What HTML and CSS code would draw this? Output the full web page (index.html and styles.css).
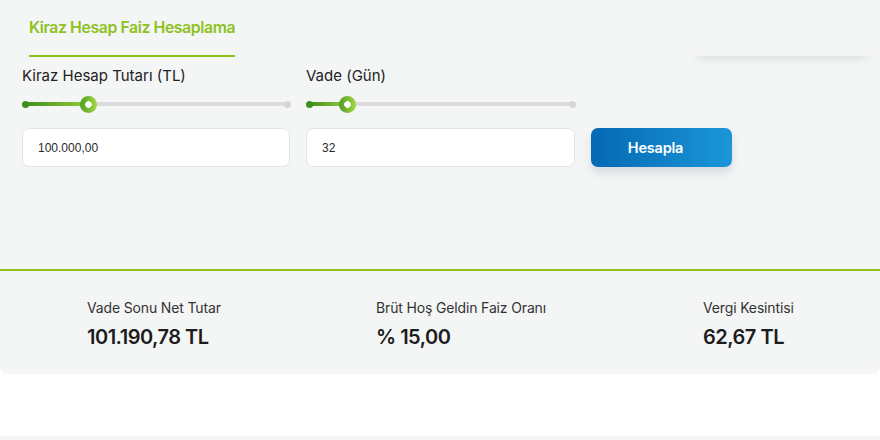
FILE: index.html
```html
<!DOCTYPE html>
<html lang="tr">
<head>
<meta charset="utf-8">
<link rel="stylesheet" href="styles.css">
</head>
<body>
<div class="panel">
  <div class="top">
    <div class="header">
      <div class="tab">Kiraz Hesap Faiz Hesaplama</div>
      <div class="card"></div>
    </div>
    <div class="form">
      <div class="field">
        <div class="label">Kiraz Hesap Tutarı (TL)</div>
        <div class="slider">
          <div class="track"></div>
          <div class="fill" style="width:24.4%"></div>
          <div class="dot start"></div>
          <div class="dot end"></div>
          <div class="thumb" style="left:24.4%"></div>
        </div>
        <div class="input">100.000,00</div>
      </div>
      <div class="field">
        <div class="label">Vade (Gün)</div>
        <div class="slider">
          <div class="track"></div>
          <div class="fill" style="width:14.5%"></div>
          <div class="dot start"></div>
          <div class="dot end"></div>
          <div class="thumb" style="left:14.5%"></div>
        </div>
        <div class="input">32</div>
      </div>
      <div class="action">
        <button class="btn">Hesapla</button>
      </div>
    </div>
  </div>
  <div class="results">
    <div class="result">
      <div class="rlabel">Vade Sonu Net Tutar</div>
      <div class="rvalue">101.190,78 TL</div>
    </div>
    <div class="result">
      <div class="rlabel">Brüt Hoş Geldin Faiz Oranı</div>
      <div class="rvalue">% 15,00</div>
    </div>
    <div class="result">
      <div class="rlabel">Vergi Kesintisi</div>
      <div class="rvalue">62,67 TL</div>
    </div>
  </div>
</div>
<div class="spacer"></div>
<div class="strip"></div>
</body>
</html>
```
FILE: styles.css
```css
* { box-sizing: border-box; }
html, body { margin: 0; padding: 0; }
body {
  background: #ffffff;
  font-family: Inter, Lato, Arial, sans-serif;
  color: #222222;
  width: 880px;
  height: 440px;
  overflow: hidden;
}
.panel {
  background: #f4f5f5;
  border-radius: 0 0 8px 8px;
  height: 374px;
  display: flex;
  flex-direction: column;
}
.top {
  height: 271px;
  padding: 0 5px 0 22px;
  border-bottom: 2px solid #8dc21f;
}
.header {
  display: flex;
  justify-content: space-between;
  height: 57px;
}
.tab {
  margin-left: 7px;
  padding-top: 18px;
  height: 57px;
  font-size: 15.8px;
  font-weight: 600;
  color: #8dc21f;
  border-bottom: 2px solid #8dc21f;
  letter-spacing: -0.4px;
}
.card {
  width: 185px;
  height: 56px;
  background: #f4f5f5;
  border-radius: 0 0 6px 6px;
  box-shadow: 0 9px 10px -8px rgba(0, 0, 0, 0.13);
}
.form {
  display: grid;
  grid-template-columns: 268px 269px 141px;
  column-gap: 16px;
  padding-top: 10px;
}
.field {
  display: flex;
  flex-direction: column;
}
.label {
  font-size: 15px;
  line-height: 18px;
  color: #222;
}
.slider {
  position: relative;
  height: 24px;
  margin: 7px 3px 12px 3px;
}
.track {
  position: absolute;
  left: 0; right: 0;
  top: 10px;
  height: 4px;
  border-radius: 2px;
  background: #dcdcdc;
}
.fill {
  position: absolute;
  left: 0;
  top: 10px;
  height: 4px;
  background: linear-gradient(90deg, #3f8f1c, #96cc3c);
}
.dot {
  position: absolute;
  top: 8.5px;
  width: 7px;
  height: 7px;
  border-radius: 50%;
}
.dot.start { left: -3.5px; background: #3f8f1c; }
.dot.end { right: -3.5px; background: #d6d6d6; }
.thumb {
  position: absolute;
  top: 3.5px;
  width: 17px;
  height: 17px;
  margin-left: -8.5px;
  border-radius: 50%;
  background: radial-gradient(circle, #ffffff 0 3px, transparent 3.6px), linear-gradient(90deg, #4e9e22, #a6d843);
}
.input {
  height: 39px;
  background: #ffffff;
  border: 1px solid #e2e4e4;
  border-radius: 7px;
  padding-left: 15px;
  display: flex;
  align-items: center;
  font-family: "Liberation Sans", Arial, sans-serif;
  font-size: 12px;
  color: #2a2a2a;
}
.action {
  display: flex;
  flex-direction: column;
  justify-content: flex-end;
}
.btn {
  height: 39px;
  width: 141px;
  border: 0;
  border-radius: 7px;
  background: linear-gradient(90deg, #0569b5, #1b96d8);
  color: #ffffff;
  font-family: Inter, Lato, Arial, sans-serif;
  font-weight: 600;
  font-size: 14.5px;
  letter-spacing: -0.2px;
  padding-right: 18px;
  box-shadow: 0 6px 10px rgba(0, 40, 80, 0.12);
}
.results {
  display: grid;
  grid-template-columns: 289px 327px auto;
  padding-left: 87px;
  padding-top: 28px;
}
.rlabel {
  font-size: 14px;
  line-height: 18px;
  color: #333;
  letter-spacing: -0.15px;
}
.rvalue {
  font-size: 20px;
  font-weight: 600;
  line-height: 26px;
  margin-top: 7px;
  color: #1c1c1c;
  letter-spacing: -0.5px;
}
.spacer { height: 62px; }
.strip { height: 10px; background: #f4f5f5; }
```
